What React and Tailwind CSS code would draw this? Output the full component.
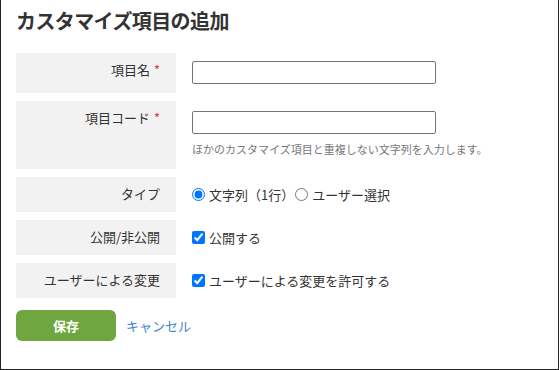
import React from "react";

const font = { fontFamily: '"Noto Sans CJK JP", "Noto Sans", sans-serif' };

function Row({ label, required, children, className = "" }) {
  return (
    <div className="flex gap-4">
      <div className={`w-[160px] shrink-0 bg-[#f2f2f2] pr-4 pt-[8px] text-right text-[13px] leading-[18px] text-[#333] ${className}`}>
        {label}
        {required && <span className="ml-[4px] text-[#e0303a]">*</span>}
      </div>
      <div className="flex-1">{children}</div>
    </div>
  );
}

export default function App() {
  return (
    <div style={font} className="w-[559px] h-[370px] bg-white border-l border-r border-b border-[#222] box-border">
      <div className="pl-[15px] pt-[9px]">
        <h1 className="text-[20px] font-bold leading-[24px] text-[#333] tracking-[-0.6px]">カスタマイズ項目の追加</h1>
        <div className="mt-[20px] flex flex-col gap-2">
          <Row label="項目名" required className="h-[40px]">
            <input type="text" className="mt-[8px] w-[244px] h-[23px] border border-[#767676] rounded-[2px]" />
          </Row>
          <Row label="項目コード" required className="h-[68px]">
            <input type="text" className="mt-[10px] w-[244px] h-[23px] border border-[#767676] rounded-[2px] block" />
            <div className="mt-[8px] text-[11px] leading-[14px] text-[#777]">ほかのカスタマイズ項目と重複しない文字列を入力します。</div>
          </Row>
          <Row label="タイプ" className="h-[35px]">
            <div className="flex items-center h-[35px] text-[13px] text-[#333]">
              <label className="flex items-center">
                <input type="radio" name="t" defaultChecked className="m-0 w-[13px] h-[13px] mr-[4px]" />
                文字列（1行）
              </label>
              <label className="flex items-center ml-[1px]">
                <input type="radio" name="t" className="m-0 w-[13px] h-[13px] mr-[4px]" />
                ユーザー選択
              </label>
            </div>
          </Row>
          <Row label="公開/非公開" className="h-[35px]">
            <label className="flex items-center h-[35px] text-[13px] text-[#333]">
              <input type="checkbox" defaultChecked className="m-0 w-[13px] h-[13px] mr-[4px]" />
              公開する
            </label>
          </Row>
          <Row label="ユーザーによる変更" className="h-[35px]">
            <label className="flex items-center h-[35px] text-[13px] text-[#333]">
              <input type="checkbox" defaultChecked className="m-0 w-[13px] h-[13px] mr-[4px]" />
              ユーザーによる変更を許可する
            </label>
          </Row>
        </div>
        <div className="mt-[12px] flex items-center gap-[10px]">
          <button className="w-[100px] h-[31px] rounded-[6px] bg-[#6fa63f] text-white text-[13px] font-bold">保存</button>
          <a className="text-[13px] text-[#3e86c8] cursor-pointer">キャンセル</a>
        </div>
      </div>
    </div>
  );
}
